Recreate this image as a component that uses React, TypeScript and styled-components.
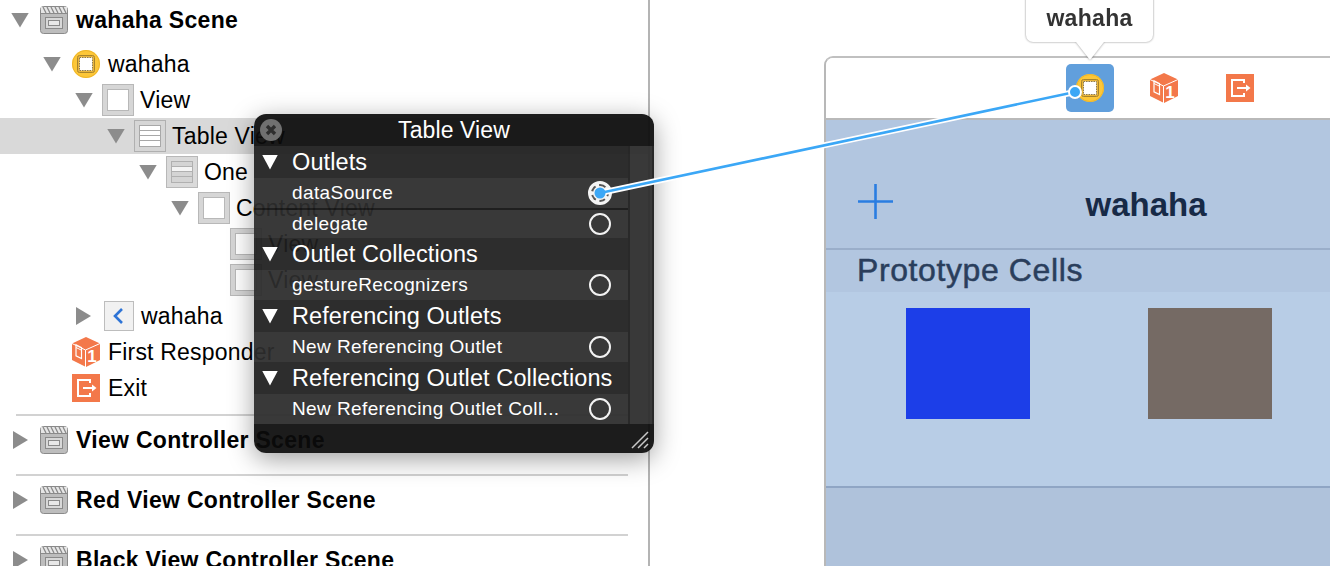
import React from 'react';
import styled, { createGlobalStyle } from 'styled-components';

const GlobalStyle = createGlobalStyle`
  html, body {
    margin: 0;
    padding: 0;
    background: #ffffff;
    overflow: hidden;
  }
`;

const Page = styled.div`
  position: relative;
  display: flex;
  width: 1330px;
  height: 566px;
  overflow: hidden;
  background: #ffffff;
  font-family: "Liberation Sans", Arial, sans-serif;
`;

/* outline on the left */

const Outline = styled.div`
  flex: 0 0 648px;
  height: 566px;
  padding-top: 2px;
  box-sizing: content-box;
  border-right: 2px solid #b4b4b4;
  overflow: hidden;
`;

const Row = styled.div<{ $indent: number; $selected?: boolean; $gapAfter?: number }>`
  display: flex;
  align-items: center;
  height: 36px;
  padding-left: ${(p) => p.$indent}px;
  margin-bottom: ${(p) => p.$gapAfter ?? 0}px;
  background: ${(p) => (p.$selected ? '#d9d9d9' : 'transparent')};
  color: #000000;
`;

const TwistSlot = styled.span`
  flex: 0 0 28px;
  display: flex;
  align-items: center;
  padding-left: 1px;
  box-sizing: border-box;
`;

const Twist = styled.span<{ $open?: boolean }>`
  display: block;
  width: ${(p) => (p.$open ? 18 : 15)}px;
  height: ${(p) => (p.$open ? 15 : 18)}px;
  background: #8c8c8c;
  clip-path: ${(p) =>
    p.$open ? 'polygon(0 0, 100% 0, 50% 100%)' : 'polygon(0 0, 100% 50%, 0 100%)'};
`;

const IconBox = styled.span`
  flex: 0 0 32px;
  height: 32px;
  display: flex;
  align-items: center;
  justify-content: center;
  margin-right: 6px;
`;

const Label = styled.span<{ $bold?: boolean }>`
  font-size: 23px;
  letter-spacing: ${(p) => (p.$bold ? 0.3 : 0.2)}px;
  line-height: 36px;
  font-weight: ${(p) => (p.$bold ? 700 : 400)};
  white-space: nowrap;
`;

const SceneBlock = styled.div`
  margin: 0 20px 0 16px;
  padding: 6px 0 16px;
  border-top: 2px solid #d2d2d2;
  height: 36px;
  box-sizing: content-box;
`;

const SceneRow = styled.div`
  display: flex;
  align-items: center;
  height: 36px;
  margin-left: -3px;
`;

const SceneTwist = styled.span`
  flex: 0 0 25px;
`;

const FirstScene = styled.div`
  margin-top: 8px;
`;

/* popover */

const Popover = styled.div`
  position: absolute;
  left: 254px;
  top: 114px;
  width: 400px;
  height: 339px;
  border-radius: 12px;
  background: rgba(11, 11, 11, 0.93);
  box-shadow: 0 6px 26px rgba(0, 0, 0, 0.38);
  color: #ffffff;
  overflow: hidden;
  display: flex;
  flex-direction: column;
`;

const PopTitle = styled.div`
  position: relative;
  flex: 0 0 32px;
  display: flex;
  align-items: center;
  justify-content: center;
  font-size: 23px;
  letter-spacing: 0.1px;
`;

const CloseButton = styled.span`
  position: absolute;
  left: 6px;
  top: 5px;
  width: 22px;
  height: 22px;
`;

const PopBody = styled.div`
  flex: 0 0 278px;
  display: flex;
  gap: 2px;
  background: rgba(255, 255, 255, 0.06);
`;

const PopRows = styled.div`
  flex: 0 0 374px;
`;

const ScrollTrack = styled.div`
  flex: 0 0 22px;
  background: rgba(255, 255, 255, 0.08);
`;

const SectionRow = styled.div`
  height: 32px;
  display: flex;
  align-items: center;
  padding-left: 8px;
  background: rgba(255, 255, 255, 0.02);
  font-size: 23.5px;
  letter-spacing: 0.1px;
  white-space: nowrap;
`;

const SectionTwist = styled.span`
  flex: 0 0 30px;
  height: 15px;
  position: relative;

  &::before {
    content: '';
    position: absolute;
    left: 0;
    top: 0;
    width: 16px;
    height: 15px;
    background: #ffffff;
    clip-path: polygon(0 0, 100% 0, 50% 100%);
  }
`;

const OutletRow = styled.div<{ $divided?: boolean }>`
  height: 30px;
  box-sizing: border-box;
  border-top: ${(p) => (p.$divided ? '2px solid rgba(0, 0, 0, 0.45)' : '0')};
  display: flex;
  align-items: center;
  justify-content: space-between;
  padding: 0 17px 0 38px;
  background: rgba(255, 255, 255, 0.08);
  font-size: 19px;
  letter-spacing: 0.4px;
  white-space: nowrap;
`;

const Radio = styled.span`
  width: 22px;
  height: 22px;
  box-sizing: border-box;
  border: 2px solid #f2f2f2;
  border-radius: 50%;
`;

const ActiveRadio = styled.span`
  width: 24px;
  height: 24px;
  margin-right: -1px;
  box-sizing: border-box;
  border: 3px solid #f4f4f4;
  border-radius: 50%;
  background: #f4f4f4;
  position: relative;

  &::before {
    content: '';
    position: absolute;
    inset: 0;
    border: 2px dashed #555555;
    border-radius: 50%;
  }
`;

const PopFooter = styled.div`
  flex: 1;
  margin-top: 2px;
  position: relative;
`;

const Grip = styled.svg`
  position: absolute;
  right: 4px;
  bottom: 4px;
`;

/* canvas on the right */

const Canvas = styled.div`
  flex: 1;
  padding: 56px 0 0 174px;
  min-width: 0;
`;

const Frame = styled.div`
  width: 640px;
  height: 510px;
  border-left: 2px solid #b8b8b8;
  border-top: 2px solid #c0c0c0;
  border-top-left-radius: 9px;
  display: flex;
  flex-direction: column;
  overflow: hidden;
`;

const Dock = styled.div`
  flex: 0 0 60px;
  display: flex;
  align-items: center;
  padding-left: 240px;
  border-bottom: 2px solid #b9b9b9;
  background: #ffffff;
`;

const DockTile = styled.span`
  width: 48px;
  height: 48px;
  border-radius: 5px;
  background: #619fdc;
  display: flex;
  align-items: center;
  justify-content: center;
`;

const DockItem = styled.span<{ $left: number }>`
  display: flex;
  margin-left: ${(p) => p.$left}px;
`;

const NavBar = styled.div`
  flex: 0 0 130px;
  display: grid;
  grid-template-columns: 1fr auto 1fr;
  align-items: center;
  padding-top: 40px;
  box-sizing: border-box;
  background: #b2c6e0;
  border-bottom: 2px solid #9aaeca;
`;

const PlusWrap = styled.span`
  margin-left: 32px;
  margin-top: -6px;
  display: flex;
`;

const NavTitle = styled.span`
  margin-top: 1px;
  font-size: 33px;
  font-weight: 700;
  color: #172a47;
`;

const SectionHead = styled.div`
  flex: 0 0 42px;
  display: flex;
  align-items: center;
  padding: 0 0 2px 31px;
  box-sizing: border-box;
  background: #b2c6e0;
  font-size: 32px;
  letter-spacing: 0.6px;
  color: #2a3e5c;
  -webkit-text-stroke: 0.5px #2a3e5c;
`;

const CollectionRow = styled.div`
  flex: 0 0 196px;
  display: flex;
  gap: 118px;
  padding: 16px 0 0 80px;
  box-sizing: border-box;
  background: #b8cde6;
  border-bottom: 2px solid #8fa5c4;
`;

const Swatch = styled.div<{ $color: string }>`
  width: 124px;
  height: 111px;
  background: ${(p) => p.$color};
`;

const Below = styled.div`
  flex: 1;
  background: #afc2db;
`;

const Tooltip = styled.div`
  position: absolute;
  left: 1026px;
  top: -10px;
  width: 127px;
  height: 52px;
  padding-top: 4px;
  box-sizing: border-box;
  display: flex;
  align-items: center;
  justify-content: center;
  background: #ffffff;
  border-radius: 7px;
  filter: drop-shadow(0 0 1px rgba(0, 0, 0, 0.45));
  font-size: 23px;
  font-weight: 700;
  letter-spacing: 0.3px;
  color: #333333;

  &::after {
    content: '';
    position: absolute;
    left: 50px;
    top: 52px;
    width: 28px;
    height: 18px;
    background: #ffffff;
    clip-path: polygon(0 0, 100% 0, 50% 100%);
  }
`;

const Wire = styled.svg`
  position: absolute;
  left: 0;
  top: 0;
  pointer-events: none;
`;

/* icons */

const SceneIcon = () => (
  <svg width="28" height="28" viewBox="0 0 28 28">
    <rect x="0.5" y="0.5" width="27" height="27" rx="3" fill="#bdbdbd" stroke="#8a8a8a" />
    <rect x="1" y="1" width="26" height="6" fill="#e6e6e6" />
    <path d="M3 1l3 6M7 1l3 6M11 1l3 6M15 1l3 6M19 1l3 6M23 1l3 6" stroke="#8a8a8a" strokeWidth="1.3" />
    <rect x="1" y="7" width="26" height="1" fill="#8a8a8a" />
    <rect x="5.5" y="11.5" width="17" height="11" fill="#d8d8d8" stroke="#8a8a8a" />
    <rect x="8.5" y="14.5" width="11" height="5" fill="#e8e8e8" stroke="#8a8a8a" />
  </svg>
);

const ControllerIcon = () => (
  <svg width="28" height="28" viewBox="0 0 28 28">
    <circle cx="14" cy="14" r="14" fill="#fdc738" />
    <circle cx="14" cy="14" r="13.5" fill="none" stroke="#eeb62a" />
    <rect x="5.5" y="5.5" width="17" height="17" rx="2" fill="#e9b53a" stroke="#a8842c" />
    <rect x="7.5" y="7.5" width="13" height="13" fill="#ffffff" stroke="#8c7a50" strokeDasharray="1.5 1" />
  </svg>
);

const ViewIcon = () => (
  <svg width="32" height="32" viewBox="0 0 32 32">
    <rect x="0.5" y="0.5" width="31" height="31" fill="#d6d6d6" stroke="#b8b8b8" />
    <rect x="5.5" y="5.5" width="21" height="21" fill="#ffffff" stroke="#b8b8b8" />
  </svg>
);

const TableIcon = () => (
  <svg width="32" height="32" viewBox="0 0 32 32">
    <rect x="0.5" y="0.5" width="31" height="31" fill="#d6d6d6" stroke="#b0b0b0" />
    <rect x="5.5" y="5.5" width="21" height="21" fill="#ffffff" stroke="#a8a8a8" />
    <path d="M6 10.5h20M6 15.5h20M6 20.5h20" stroke="#a8a8a8" />
  </svg>
);

const CellIcon = () => (
  <svg width="32" height="32" viewBox="0 0 32 32">
    <rect x="0.5" y="0.5" width="31" height="31" fill="#dadada" stroke="#b8b8b8" />
    <rect x="5.5" y="5.5" width="21" height="21" fill="#d4d4d4" stroke="#b0b0b0" />
    <rect x="6" y="10" width="20" height="5" fill="#f4f4f4" />
    <path d="M6 10.5h20M6 15.5h20M6 20.5h20" stroke="#b0b0b0" />
  </svg>
);

const BackIcon = () => (
  <svg width="30" height="30" viewBox="0 0 30 30">
    <rect x="0.5" y="0.5" width="29" height="29" fill="#f1f1f1" stroke="#bdbdbd" />
    <path d="M18 8l-7 7 7 7" fill="none" stroke="#2e74d6" strokeWidth="2.6" />
  </svg>
);

const CubeIcon = () => (
  <svg width="28" height="30" viewBox="0 0 28 30">
    <path d="M14 0l14 6.5V23l-14 7-14-7V6.5z" fill="#f3784a" />
    <path d="M0 6.5l13.5 6.5V30M28 6.5L13.5 13" fill="none" stroke="#ffffff" strokeWidth="1" />
    <path d="M4 7.8l5.5 2.7v11L4 18.8z" fill="none" stroke="#ffffff" strokeWidth="1.2" />
    <path d="M4 10.5l5.5 2.7" stroke="#ffffff" strokeWidth="1" />
    <text x="20" y="25" fontSize="17" fontWeight="700" fill="#ffffff" textAnchor="middle" fontFamily="Liberation Sans">1</text>
  </svg>
);

const ExitIcon = () => (
  <svg width="28" height="28" viewBox="0 0 28 28">
    <rect width="28" height="28" fill="#f3784a" />
    <path d="M18 9V6H6v16h12v-3" fill="none" stroke="#ffffff" strokeWidth="2" />
    <path d="M11 14h11" stroke="#ffffff" strokeWidth="2" />
    <path d="M20 10.5l4.5 3.5-4.5 3.5z" fill="#ffffff" />
  </svg>
);

const outlets = [
  {
    title: 'Outlets',
    items: ['dataSource', 'delegate'],
  },
  { title: 'Outlet Collections', items: ['gestureRecognizers'] },
  { title: 'Referencing Outlets', items: ['New Referencing Outlet'] },
  { title: 'Referencing Outlet Collections', items: ['New Referencing Outlet Coll...'] },
];

const scenes = ['View Controller Scene', 'Red View Controller Scene', 'Black View Controller Scene'];

const App: React.FC = () => {
  return (
    <Page>
      <GlobalStyle />
      <Outline>
        <Row $indent={10} $gapAfter={8}>
          <TwistSlot><Twist $open /></TwistSlot>
          <IconBox><SceneIcon /></IconBox>
          <Label $bold>wahaha Scene</Label>
        </Row>
        <Row $indent={42}>
          <TwistSlot><Twist $open /></TwistSlot>
          <IconBox><ControllerIcon /></IconBox>
          <Label>wahaha</Label>
        </Row>
        <Row $indent={74}>
          <TwistSlot><Twist $open /></TwistSlot>
          <IconBox><ViewIcon /></IconBox>
          <Label>View</Label>
        </Row>
        <Row $indent={106} $selected>
          <TwistSlot><Twist $open /></TwistSlot>
          <IconBox><TableIcon /></IconBox>
          <Label>Table View</Label>
        </Row>
        <Row $indent={138}>
          <TwistSlot><Twist $open /></TwistSlot>
          <IconBox><CellIcon /></IconBox>
          <Label>One</Label>
        </Row>
        <Row $indent={170}>
          <TwistSlot><Twist $open /></TwistSlot>
          <IconBox><ViewIcon /></IconBox>
          <Label>Content View</Label>
        </Row>
        <Row $indent={202}>
          <TwistSlot />
          <IconBox><ViewIcon /></IconBox>
          <Label>View</Label>
        </Row>
        <Row $indent={202}>
          <TwistSlot />
          <IconBox><ViewIcon /></IconBox>
          <Label>View</Label>
        </Row>
        <Row $indent={75}>
          <TwistSlot><Twist /></TwistSlot>
          <IconBox><BackIcon /></IconBox>
          <Label>wahaha</Label>
        </Row>
        <Row $indent={42}>
          <TwistSlot />
          <IconBox><CubeIcon /></IconBox>
          <Label>First Responder</Label>
        </Row>
        <Row $indent={42}>
          <TwistSlot />
          <IconBox><ExitIcon /></IconBox>
          <Label>Exit</Label>
        </Row>
        <FirstScene>
          {scenes.map((scene) => (
            <SceneBlock key={scene}>
              <SceneRow>
                <SceneTwist><Twist /></SceneTwist>
                <IconBox><SceneIcon /></IconBox>
                <Label $bold>{scene}</Label>
              </SceneRow>
            </SceneBlock>
          ))}
        </FirstScene>
      </Outline>

      <Canvas>
        <Frame>
          <Dock>
            <DockTile><ControllerIcon /></DockTile>
            <DockItem $left={36}><CubeIcon /></DockItem>
            <DockItem $left={48}><ExitIcon /></DockItem>
          </Dock>
          <NavBar>
            <PlusWrap>
              <svg width="35" height="35" viewBox="0 0 35 35">
                <path d="M17.5 0v35M0 17.5h35" stroke="#2a7de1" strokeWidth="2.6" />
              </svg>
            </PlusWrap>
            <NavTitle>wahaha</NavTitle>
          </NavBar>
          <SectionHead>Prototype Cells</SectionHead>
          <CollectionRow>
            <Swatch $color="#1c3ee8" />
            <Swatch $color="#756a64" />
          </CollectionRow>
          <Below />
        </Frame>
      </Canvas>

      <Tooltip>wahaha</Tooltip>

      <Popover>
        <PopTitle>
          <CloseButton>
            <svg width="22" height="22" viewBox="0 0 22 22">
              <circle cx="11" cy="11" r="11" fill="#707070" />
              <path d="M7 7l8 8M15 7l-8 8" stroke="#2e2e2e" strokeWidth="3.4" />
            </svg>
          </CloseButton>
          Table View
        </PopTitle>
        <PopBody>
          <PopRows>
            {outlets.map((group) => (
              <React.Fragment key={group.title}>
                <SectionRow>
                  <SectionTwist />
                  {group.title}
                </SectionRow>
                {group.items.map((item) => (
                  <OutletRow key={item} $divided={item === 'delegate'}>
                    {item}
                    {item === 'dataSource' ? <ActiveRadio /> : <Radio />}
                  </OutletRow>
                ))}
              </React.Fragment>
            ))}
          </PopRows>
          <ScrollTrack />
        </PopBody>
        <PopFooter>
          <Grip width="19" height="18" viewBox="0 0 19 18">
            <path d="M1 17L17 1M7 17L17 7M13 17l4-4" stroke="#c8c8c8" strokeWidth="1.5" />
          </Grip>
        </PopFooter>
      </Popover>

      <Wire width="1330" height="566">
        <line x1="600" y1="193" x2="1075" y2="92" stroke="#ffffff" strokeWidth="6" />
        <line x1="600" y1="193" x2="1075" y2="92" stroke="#3ba7f6" strokeWidth="2.6" />
        <circle cx="600" cy="193" r="5.5" fill="#3ba7f6" />
        <circle cx="1075" cy="92" r="6" fill="#3ba7f6" stroke="#ffffff" strokeWidth="2" />
      </Wire>
    </Page>
  );
};

export default App;
